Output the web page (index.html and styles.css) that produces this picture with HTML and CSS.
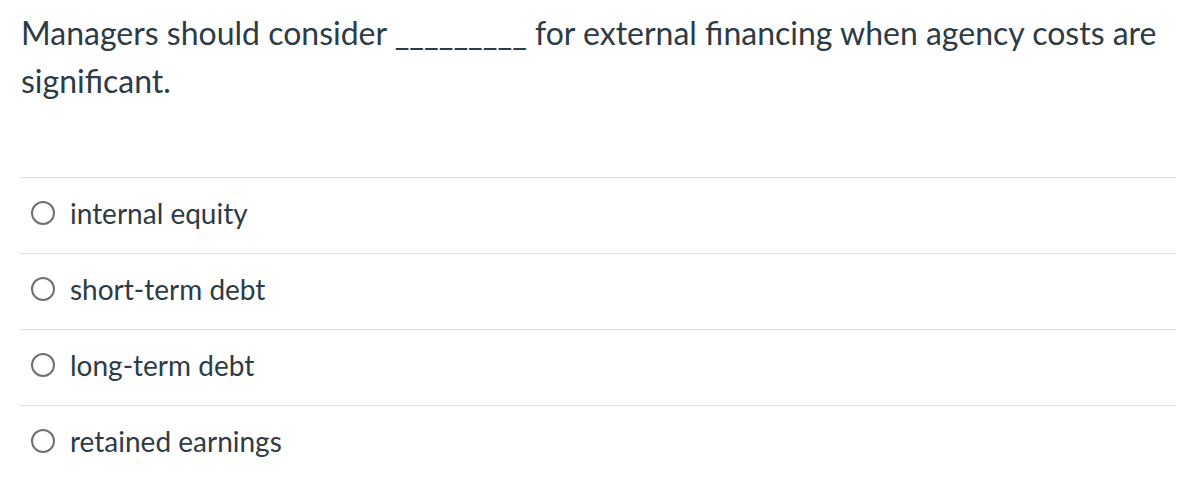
FILE: index.html
```html
<!DOCTYPE html>
<html>
<head>
<meta charset="utf-8">
<link rel="stylesheet" href="styles.css">
</head>
<body>
<div class="quiz">
  <p class="question">Managers should consider _________ for external financing when agency costs are significant.</p>
  <ul class="answers">
    <li class="answer"><span class="radio"></span><span class="label">internal equity</span></li>
    <li class="answer"><span class="radio"></span><span class="label">short-term debt</span></li>
    <li class="answer"><span class="radio"></span><span class="label">long-term debt</span></li>
    <li class="answer"><span class="radio"></span><span class="label">retained earnings</span></li>
  </ul>
</div>
</body>
</html>
```
FILE: styles.css
```css
html, body {
  margin: 0;
  padding: 0;
  background: #fff;
}
.quiz {
  padding: 9px 4px 0 20px;
  font-family: Lato, "Open Sans", sans-serif;
  color: #2d3b45;
}
.question {
  margin: 0;
  font-size: 32px;
  line-height: 48px;
  padding-left: 1px;
}
.answers {
  list-style: none;
  margin: 72px 0 0 0;
  padding: 0;
}
.answer {
  display: flex;
  align-items: center;
  gap: 15px;
  height: 69px;
  padding-bottom: 6px;
  border-top: 1.5px solid #dcdcdc;
  padding-left: 11px;
  font-size: 28px;
}
.radio {
  width: 20px;
  height: 20px;
  border: 2px solid #707070;
  border-radius: 50%;
  box-sizing: content-box;
  flex: none;
}
.label {
  line-height: 32px;
}
```
